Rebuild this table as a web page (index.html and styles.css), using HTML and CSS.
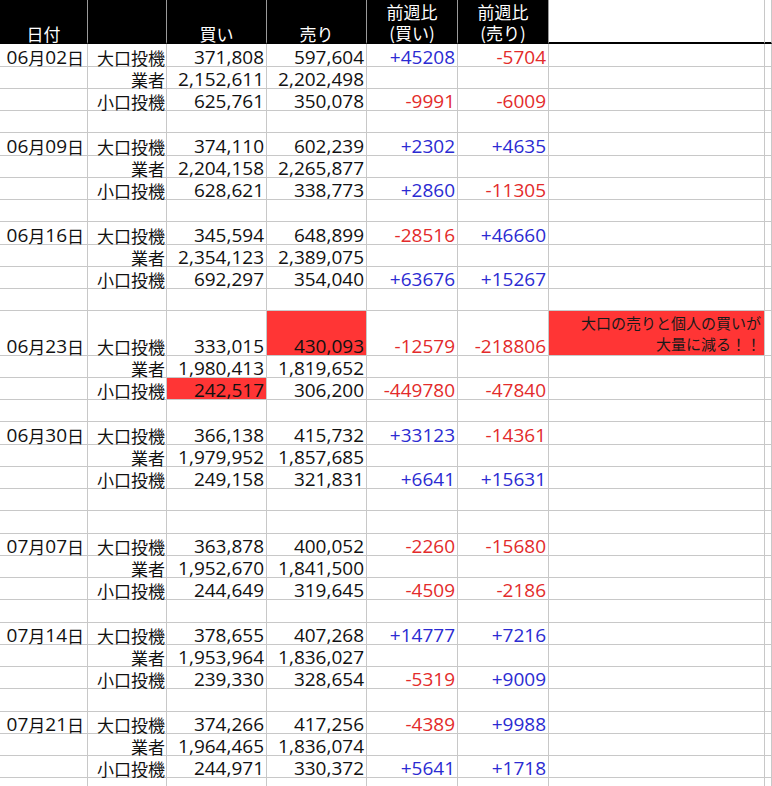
FILE: index.html
```html
<!DOCTYPE html>
<html lang="ja">
<head>
<meta charset="utf-8">
<title>週次ポジション</title>
<link rel="stylesheet" href="styles.css">
</head>
<body>
<div class="sheet">
  <div class="row tall head">
    <div class="h"><span>日付</span></div><div class="h"></div><div class="h"><span>買い</span></div><div class="h"><span>売り</span></div>
    <div class="h two"><span>前週比</span><span>(買い)</span></div>
    <div class="h two"><span>前週比</span><span>(売り)</span></div>
    <div class="hw"></div><div class="hw"></div>
  </div>

  <div class="row"><div class="d">06<span class="k">月</span>02<span class="k">日</span></div><div>大口投機</div><div class="n">371,808</div><div class="n">597,604</div><div class="n blue">+45208</div><div class="n red">-5704</div><div></div><div></div></div>
  <div class="row"><div></div><div>業者</div><div class="n">2,152,611</div><div class="n">2,202,498</div><div></div><div></div><div></div><div></div></div>
  <div class="row"><div></div><div>小口投機</div><div class="n">625,761</div><div class="n">350,078</div><div class="n red">-9991</div><div class="n red">-6009</div><div></div><div></div></div>
  <div class="row"><div></div><div></div><div></div><div></div><div></div><div></div><div></div><div></div></div>

  <div class="row"><div class="d">06<span class="k">月</span>09<span class="k">日</span></div><div>大口投機</div><div class="n">374,110</div><div class="n">602,239</div><div class="n blue">+2302</div><div class="n blue">+4635</div><div></div><div></div></div>
  <div class="row"><div></div><div>業者</div><div class="n">2,204,158</div><div class="n">2,265,877</div><div></div><div></div><div></div><div></div></div>
  <div class="row"><div></div><div>小口投機</div><div class="n">628,621</div><div class="n">338,773</div><div class="n blue">+2860</div><div class="n red">-11305</div><div></div><div></div></div>
  <div class="row"><div></div><div></div><div></div><div></div><div></div><div></div><div></div><div></div></div>

  <div class="row"><div class="d">06<span class="k">月</span>16<span class="k">日</span></div><div>大口投機</div><div class="n">345,594</div><div class="n">648,899</div><div class="n red">-28516</div><div class="n blue">+46660</div><div></div><div></div></div>
  <div class="row"><div></div><div>業者</div><div class="n">2,354,123</div><div class="n">2,389,075</div><div></div><div></div><div></div><div></div></div>
  <div class="row"><div></div><div>小口投機</div><div class="n">692,297</div><div class="n">354,040</div><div class="n blue">+63676</div><div class="n blue">+15267</div><div></div><div></div></div>
  <div class="row"><div></div><div></div><div></div><div></div><div></div><div></div><div></div><div></div></div>

  <div class="row tall"><div class="d">06<span class="k">月</span>23<span class="k">日</span></div><div>大口投機</div><div class="n">333,015</div><div class="n fill">430,093</div><div class="n red">-12579</div><div class="n red">-218806</div><div class="note fill"><span>大口の売りと個人の買いが</span><span>大量に減る！！</span></div><div></div></div>
  <div class="row"><div></div><div>業者</div><div class="n">1,980,413</div><div class="n">1,819,652</div><div></div><div></div><div></div><div></div></div>
  <div class="row"><div></div><div>小口投機</div><div class="n fill">242,517</div><div class="n">306,200</div><div class="n red">-449780</div><div class="n red">-47840</div><div></div><div></div></div>
  <div class="row"><div></div><div></div><div></div><div></div><div></div><div></div><div></div><div></div></div>

  <div class="row"><div class="d">06<span class="k">月</span>30<span class="k">日</span></div><div>大口投機</div><div class="n">366,138</div><div class="n">415,732</div><div class="n blue">+33123</div><div class="n red">-14361</div><div></div><div></div></div>
  <div class="row"><div></div><div>業者</div><div class="n">1,979,952</div><div class="n">1,857,685</div><div></div><div></div><div></div><div></div></div>
  <div class="row"><div></div><div>小口投機</div><div class="n">249,158</div><div class="n">321,831</div><div class="n blue">+6641</div><div class="n blue">+15631</div><div></div><div></div></div>
  <div class="row"><div></div><div></div><div></div><div></div><div></div><div></div><div></div><div></div></div>
  <div class="row"><div></div><div></div><div></div><div></div><div></div><div></div><div></div><div></div></div>

  <div class="row"><div class="d">07<span class="k">月</span>07<span class="k">日</span></div><div>大口投機</div><div class="n">363,878</div><div class="n">400,052</div><div class="n red">-2260</div><div class="n red">-15680</div><div></div><div></div></div>
  <div class="row"><div></div><div>業者</div><div class="n">1,952,670</div><div class="n">1,841,500</div><div></div><div></div><div></div><div></div></div>
  <div class="row"><div></div><div>小口投機</div><div class="n">244,649</div><div class="n">319,645</div><div class="n red">-4509</div><div class="n red">-2186</div><div></div><div></div></div>
  <div class="row"><div></div><div></div><div></div><div></div><div></div><div></div><div></div><div></div></div>

  <div class="row"><div class="d">07<span class="k">月</span>14<span class="k">日</span></div><div>大口投機</div><div class="n">378,655</div><div class="n">407,268</div><div class="n blue">+14777</div><div class="n blue">+7216</div><div></div><div></div></div>
  <div class="row"><div></div><div>業者</div><div class="n">1,953,964</div><div class="n">1,836,027</div><div></div><div></div><div></div><div></div></div>
  <div class="row"><div></div><div>小口投機</div><div class="n">239,330</div><div class="n">328,654</div><div class="n red">-5319</div><div class="n blue">+9009</div><div></div><div></div></div>
  <div class="row"><div></div><div></div><div></div><div></div><div></div><div></div><div></div><div></div></div>

  <div class="row"><div class="d">07<span class="k">月</span>21<span class="k">日</span></div><div>大口投機</div><div class="n">374,266</div><div class="n">417,256</div><div class="n red">-4389</div><div class="n blue">+9988</div><div></div><div></div></div>
  <div class="row"><div></div><div>業者</div><div class="n">1,964,465</div><div class="n">1,836,074</div><div></div><div></div><div></div><div></div></div>
  <div class="row"><div></div><div>小口投機</div><div class="n">244,971</div><div class="n">330,372</div><div class="n blue">+5641</div><div class="n blue">+1718</div><div></div><div></div></div>
  <div class="row"><div></div><div></div><div></div><div></div><div></div><div></div><div></div><div></div></div>
</div>
</body>
</html>
```
FILE: styles.css
```css
html, body {
  margin: 0;
  padding: 0;
  background: #fff;
}
body {
  font-family: "Noto Sans CJK JP", sans-serif;
  color: #111;
}
.sheet {
  width: 772px;
  height: 786px;
  overflow: hidden;
}
.row {
  display: grid;
  grid-template-columns: 88px 79px 100px 100px 91px 91px 216px 1fr;
  height: 22.24px;
}
.row.tall {
  height: 44.48px;
}
.row > div {
  box-sizing: border-box;
  border-right: 1px solid #c8c8c8;
  border-bottom: 1px solid #c8c8c8;
  display: flex;
  align-items: flex-end;
  justify-content: flex-end;
  padding-right: 1px;
  font-size: 17px;
  line-height: 17px;
  white-space: nowrap;
}
.row > .n {
  font-family: "Open Sans", sans-serif;
  font-size: 19px;
  padding-right: 2px;
}
.row > .d {
  font-family: "Open Sans", sans-serif;
  font-size: 19px;
  padding-right: 3px;
}
.k {
  font-family: "Noto Sans CJK JP", sans-serif;
  font-size: 17px;
}
.blue { color: #2b2bd2; }
.red { color: #e32b2b; }
.row > .fill { background: #ff3535; }
.row > .note {
  flex-direction: column;
  align-items: flex-end;
  justify-content: flex-end;
  font-size: 15px;
  line-height: 21.5px;
  padding-right: 3px;
  color: #1a1a1a;
}
.head > .h {
  background: #000;
  color: #fff;
  justify-content: center;
  padding-right: 0;
  line-height: 21px;
  border-bottom: 2px solid #000;
  border-right-color: #9a9a9a;
}
.head > .h > span:last-child {
  margin-bottom: -2px;
}
.head > .two {
  flex-direction: column;
  align-items: center;
}
.head > .hw {
  border-bottom: 2px solid #000;
}
```
